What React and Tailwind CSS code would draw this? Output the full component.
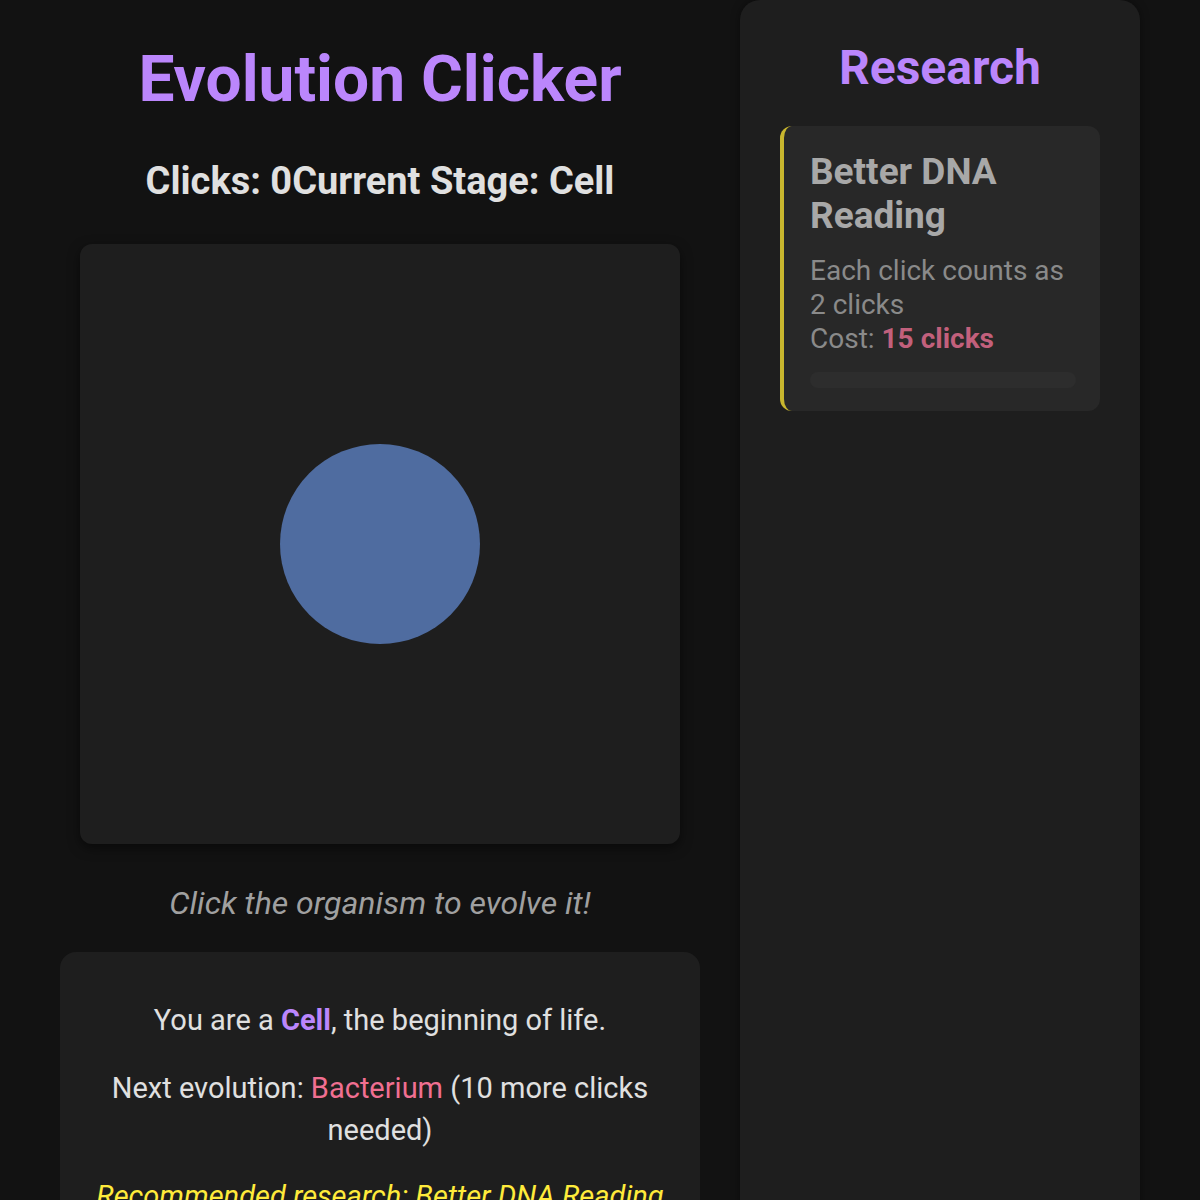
import React from 'react';

const research = [
  {
    name: 'Better DNA Reading',
    description: 'Each click counts as 2 clicks',
    cost: 15,
  },
];

const ResearchCard = ({ item }) => (
  <div className="rounded-xl border-l-4 border-[#c8b62e] bg-[#282828] pl-[26px] pr-6 pt-[24px] pb-[23px]">
    <h3 className="text-[37px] font-bold leading-[44px] text-[#a8a8a8]">{item.name}</h3>
    <p className="mt-[16px] text-[28px] leading-[34px] text-[#8a8a8a]">
      {item.description}
      <br />
      Cost: <span className="font-bold text-[#c2607c]">{item.cost} clicks</span>
    </p>
    <div className="mt-[16px] h-[16px] rounded-full bg-[#2d2d2d]" />
  </div>
);

const App = () => {
  return (
    <div
      className="h-[1200px] overflow-hidden bg-[#121212] text-[#e0e0e0]"
      style={{ fontFamily: 'Roboto, "Liberation Sans", sans-serif' }}
    >
      <div className="mx-auto flex w-[1080px] gap-10">
        {/* Game column */}
        <div className="flex w-[640px] flex-col items-center">
          <h1 className="mt-[40px] text-[64px] font-bold leading-[80px] text-[#bb86fc]">Evolution Clicker</h1>
          <h2 className="mt-[39px] text-[38px] font-bold leading-[44px] text-[#e0e0e0]">
            Clicks: 0Current Stage: Cell
          </h2>

          {/* Organism area */}
          <div className="mt-[41px] flex h-[600px] w-[600px] items-center justify-center rounded-xl bg-[#1e1e1e] shadow-[0_4px_12px_rgba(0,0,0,0.5)]">
            <button className="h-[200px] w-[200px] rounded-full bg-[#4f6ca0]" />
          </div>

          <p className="mt-[40px] text-[32px] italic leading-[38px] text-[#a0a0a0]">
            Click the organism to evolve it!
          </p>

          {/* Stage info */}
          <div className="mt-[30px] w-[640px] rounded-2xl bg-[#1e1e1e] px-[24px] pt-[24px] pb-[24px] text-center text-[29px] leading-[42px]">
            <p className="mt-[23px]">
              You are a <span className="font-bold text-[#bb86fc]">Cell</span>, the beginning of life.
            </p>
            <p className="mt-[26px]">
              Next evolution: <span className="text-[#f06f91]">Bacterium</span> (10 more clicks needed)
            </p>
            <p className="mt-[24px] italic text-[#ffeb3b]">Recommended research: Better DNA Reading</p>
          </div>
        </div>

        {/* Research panel */}
        <div className="min-h-[1200px] w-[400px] rounded-t-[20px] bg-[#1e1e1e] px-10 pt-[40px] shadow-[0_0_10px_rgba(0,0,0,0.4)]">
          <h2 className="text-center text-[48px] font-bold leading-[56px] text-[#bb86fc]">Research</h2>
          <div className="mt-[30px] flex flex-col gap-4">
            {research.map((item, index) => (
              <ResearchCard key={index} item={item} />
            ))}
          </div>
        </div>
      </div>
    </div>
  );
};

export default App;
